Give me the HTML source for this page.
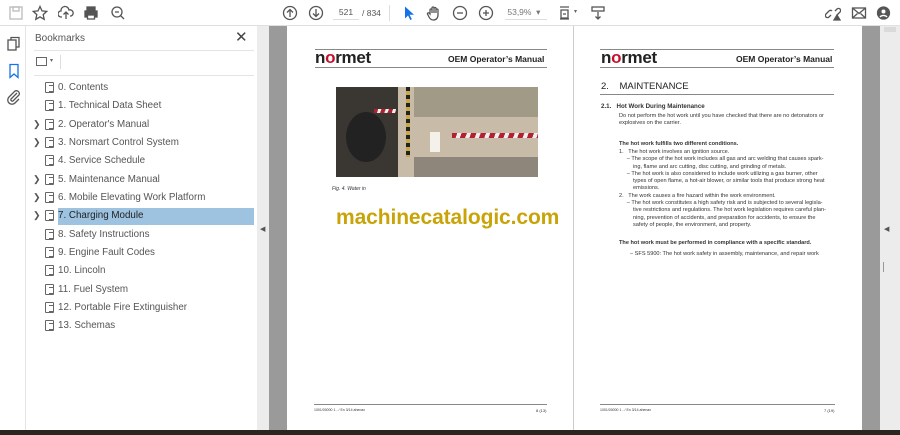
<!DOCTYPE html>
<html><head><meta charset="utf-8"><style>
*{margin:0;padding:0;box-sizing:border-box}
body{width:900px;height:435px;overflow:hidden;background:#fff;font-family:"Liberation Sans",sans-serif;position:relative}
.abs{position:absolute}
.tb{left:0;top:0;width:900px;height:26px;background:#fff;border-bottom:1px solid #e0e0e0}
.ic{position:absolute;top:5px;width:16px;height:16px;stroke:#555;fill:none;stroke-width:1.3}
.rail{left:0;top:26px;width:26px;height:404px;background:#fff;border-right:1px solid #e4e4e4}
.panel{left:26px;top:26px;width:231px;height:404px;background:#fff}
.bm{position:absolute;left:58px;font-size:9.8px;color:#555;height:17px;line-height:17px;white-space:nowrap}
.bi{position:absolute;left:45px;width:9px;height:11px;border:1px solid #666;border-radius:1px}
.bi:after{content:"";position:absolute;left:3px;top:2px;width:4px;height:5px;border-top:1px solid #666;border-bottom:1px solid #666}
.chev{position:absolute;left:33px;font-size:9px;color:#555}
.page{background:#fff}
.ptxt{position:absolute;font-size:5.6px;color:#333;line-height:7.3px;white-space:nowrap}
.logo{position:absolute;font-weight:bold;font-size:17px;color:#222;letter-spacing:-0.3px}
.logo span{color:#c8102e}
</style></head><body>
<div class="abs tb">
<svg class="ic" style="left:8px;stroke:#bbb" viewBox="0 0 16 16"><rect x="2" y="2" width="12" height="12"/><rect x="5" y="2" width="6" height="4"/></svg>
<svg class="ic" style="left:32px" viewBox="0 0 16 16"><path d="M8 1.5l2 4.4 4.7.5-3.5 3.2 1 4.7L8 11.9l-4.2 2.4 1-4.7L1.3 6.4 6 5.9z"/></svg>
<svg class="ic" style="left:58px" viewBox="0 0 16 16"><path d="M4 12H3a3 3 0 010-6 4 4 0 018-1 3 3 0 012 6h-1M8 14V7M5.5 9.5L8 7l2.5 2.5"/></svg>
<svg class="ic" style="left:83px" viewBox="0 0 16 16"><rect x="4" y="2" width="8" height="4" fill="#555"/><rect x="2" y="6" width="12" height="6" fill="#555"/><rect x="4.5" y="10" width="7" height="4" fill="#fff"/></svg>
<svg class="ic" style="left:110px" viewBox="0 0 16 16"><circle cx="7" cy="7" r="5"/><path d="M10.5 10.5L14 14M5 7h4"/></svg>
<svg class="ic" style="left:282px" viewBox="0 0 16 16"><circle cx="8" cy="8" r="6.5"/><path d="M8 12V4.5M5 7.5l3-3 3 3"/></svg>
<svg class="ic" style="left:308px" viewBox="0 0 16 16"><circle cx="8" cy="8" r="6.5"/><path d="M8 4v7.5M5 8.5l3 3 3-3"/></svg>
<div class="abs" style="left:333px;top:7px;width:26px;height:13px;border-bottom:1px solid #ddd;font-size:8.5px;color:#555;text-align:center">521</div>
<div class="abs" style="left:362px;top:8px;font-size:8.5px;color:#555">/ 834</div>
<div class="abs" style="left:389px;top:5px;width:1px;height:16px;background:#ddd"></div>
<svg class="ic" style="left:401px;stroke:none" viewBox="0 0 16 16"><path d="M4 1.5v12l3-3 2.3 4.5 1.6-.8-2.3-4.4H13z" fill="#1473e6"/></svg>
<svg class="ic" style="left:426px" viewBox="0 0 16 16"><path d="M4 9V5a1 1 0 012 0v3V3a1 1 0 012 0v5V3.5a1 1 0 012 0V8 5a1 1 0 012 0v5c0 3-2 5-4.5 5S4 14 3 12l-1.5-3a1 1 0 011.8-.8z"/></svg>
<svg class="ic" style="left:452px" viewBox="0 0 16 16"><circle cx="8" cy="8" r="6.5"/><path d="M5 8h6"/></svg>
<svg class="ic" style="left:478px" viewBox="0 0 16 16"><circle cx="8" cy="8" r="6.5"/><path d="M5 8h6M8 5v6"/></svg>
<div class="abs" style="left:505px;top:7px;width:42px;height:13px;border-bottom:1px solid #ddd;font-size:8.5px;color:#777">&nbsp;53,9% &nbsp;&#9662;</div>
<svg class="ic" style="left:558px" viewBox="0 0 16 16"><path d="M2 2h9M2 14h9M3 5v8h7V5zM5 9h3"/></svg>
<div class="abs" style="left:574px;top:8px;font-size:6px;color:#666">&#9662;</div>
<svg class="ic" style="left:590px" viewBox="0 0 16 16"><rect x="2" y="2" width="12" height="4"/><path d="M8 7v7M5.5 11.5L8 14l2.5-2.5"/></svg>
<svg class="ic" style="left:825px" viewBox="0 0 16 16"><path d="M6 10l-2 2a2 2 0 01-3-3l3-3a2 2 0 013 0M10 6l2-2a2 2 0 013 3l-3 3"/><path d="M9 15l3-5 3 5z" fill="#555"/></svg>
<svg class="ic" style="left:851px" viewBox="0 0 16 16"><rect x="1.5" y="3" width="13" height="10"/><path d="M1.5 3l6.5 5.5L14.5 3M1.5 13l5-4.5M14.5 13l-5-4.5"/></svg>
<svg class="ic" style="left:876px" viewBox="0 0 16 16"><circle cx="7.5" cy="8" r="6" fill="#555"/><circle cx="7.5" cy="6.5" r="2" fill="#fff" stroke="none"/><path d="M4 12a4 3 0 017 0" stroke="#fff"/></svg>
</div>
<div class="abs rail">
<svg class="ic" style="left:6px;top:10px" viewBox="0 0 16 16"><rect x="2" y="4" width="8" height="10"/><path d="M5 4V1.5h8V11h-3"/></svg>
<svg class="ic" style="left:6px;top:37px;stroke:#1473e6" viewBox="0 0 16 16"><path d="M4 1.5h8v13L8 11l-4 3.5z"/></svg>
<svg class="ic" style="left:6px;top:63px" viewBox="0 0 16 16"><path d="M11 4L5 10a1.5 1.5 0 002 2l6-6a3 3 0 00-4-4L3 8a4 4 0 006 6l4-4"/></svg>
</div>
<div class="abs panel">
<div class="abs" style="left:9px;top:7px;font-size:10px;color:#555">Bookmarks</div>
<div class="abs" style="left:209px;top:2px;font-size:15px;color:#444">&#x2715;</div>
<div class="abs" style="left:8px;top:24px;width:220px;height:1px;background:#e4e4e4"></div>
<div class="abs" style="left:10px;top:31px;width:11px;height:9px;border:1px solid #666"></div>
<div class="abs" style="left:24px;top:31px;font-size:6px;color:#666">&#9662;</div>
<div class="abs" style="left:34px;top:29px;width:1px;height:14px;background:#ddd"></div>
<div class="abs" style="left:8px;top:49px;width:220px;height:1px;background:#e4e4e4"></div>
</div>
<div class="abs" style="left:58px;top:208px;width:196px;height:17px;background:#9ec3e0"></div>
<div class="abs" style="left:257px;top:26px;width:12px;height:404px;background:#ececec"></div>
<div class="abs" style="left:260px;top:225px;font-size:7px;color:#555">&#9664;</div>
<div class="abs" style="left:269px;top:26px;width:18px;height:404px;background:#9a9a9a"></div>
<div class="abs" style="left:862px;top:26px;width:18px;height:404px;background:#9a9a9a"></div>
<div class="abs" style="left:880px;top:26px;width:20px;height:404px;background:#ececec"></div>
<div class="abs" style="left:884px;top:225px;font-size:7px;color:#555">&#9664;</div>
<div class="abs" style="left:884px;top:27px;width:12px;height:5px;background:#dadada"></div>
<div class="abs" style="left:883px;top:262px;width:1px;height:10px;background:#999"></div>
<div class="abs" style="left:0;top:430px;width:900px;height:5px;background:#2b2520"></div>
<!-- pages -->
<div class="abs page" style="left:287px;top:26px;width:575px;height:404px"></div>
<div class="abs" style="left:573px;top:26px;width:1px;height:404px;background:#ccc"></div>
<!-- page 1 -->
<div class="abs" style="left:315px;top:49px;width:232px;height:1px;background:#888"></div>
<div class="logo" style="left:315px;top:48px">n<span>o</span>rmet</div>
<div class="abs" style="left:448px;top:54px;font-size:8.5px;font-weight:bold;color:#222">OEM Operator’s Manual</div>
<div class="abs" style="left:315px;top:67px;width:232px;height:1px;background:#888"></div>
<div class="abs" style="left:336px;top:87px;width:202px;height:90px;background:#c8bca8;overflow:hidden">
 <div class="abs" style="left:0;top:0;width:62px;height:90px;background:#3a3732"></div>
 <div class="abs" style="left:10px;top:25px;width:40px;height:50px;border-radius:50%;background:#222"></div>
 <div class="abs" style="left:70px;top:0;width:4px;height:70px;background:repeating-linear-gradient(180deg,#222 0 4px,#c9a84a 4px 8px)"></div>
 <div class="abs" style="left:78px;top:0;width:124px;height:30px;background:#a09a86"></div>
 <div class="abs" style="left:78px;top:70px;width:124px;height:20px;background:#8e867a"></div>
 <div class="abs" style="left:116px;top:46px;width:86px;height:5px;background:repeating-linear-gradient(110deg,#b32030 0 5px,#eee 5px 9px)"></div>
 <div class="abs" style="left:38px;top:22px;width:22px;height:4px;background:repeating-linear-gradient(110deg,#b32030 0 4px,#eee 4px 7px)"></div>
 <div class="abs" style="left:94px;top:45px;width:10px;height:20px;background:#f4f1ea"></div>
</div>
<div class="ptxt" style="left:332px;top:186px;font-style:italic;font-size:5px">Fig. 4. Water in</div>
<div class="abs" style="left:336px;top:206px;font-size:21px;font-weight:bold;color:#c9a408;letter-spacing:-0.1px">machinecatalogic.com</div>
<div class="abs" style="left:314px;top:404px;width:233px;height:1px;background:#888"></div>
<div class="ptxt" style="left:314px;top:407px;font-size:3.5px">1001/00000 1 - / En 3/14 ahenax</div>
<div class="ptxt" style="left:536px;top:407px;font-size:4px">8 (13)</div>
<!-- page 2 -->
<div class="abs" style="left:600px;top:49px;width:234px;height:1px;background:#888"></div>
<div class="logo" style="left:601px;top:48px">n<span>o</span>rmet</div>
<div class="abs" style="left:736px;top:54px;font-size:8.5px;font-weight:bold;color:#222">OEM Operator’s Manual</div>
<div class="abs" style="left:600px;top:67px;width:234px;height:1px;background:#888"></div>
<div class="abs" style="left:601px;top:81px;font-size:9.5px;color:#222">2.&nbsp;&nbsp;&nbsp; MAINTENANCE</div>
<div class="abs" style="left:600px;top:94px;width:234px;height:1px;background:#888"></div>
<div class="ptxt" style="left:601px;top:103px;font-size:6.2px;font-weight:bold">2.1.&nbsp;&nbsp; Hot Work During Maintenance</div>
<div class="ptxt" style="left:619px;top:113px">Do not perform the hot work until you have checked that there are no detonators or<br>explosives on the carrier.</div>
<div class="ptxt" style="left:619px;top:141px;font-weight:bold">The hot work fulfills two different conditions.</div>
<div class="ptxt" style="left:619px;top:149px">1.&nbsp;&nbsp; The hot work involves an ignition source.<br>&nbsp;&nbsp;&nbsp;&nbsp;&nbsp;– The scope of the hot work includes all gas and arc welding that causes spark-<br>&nbsp;&nbsp;&nbsp;&nbsp;&nbsp;&nbsp;&nbsp;&nbsp; ing, flame and arc cutting, disc cutting, and grinding of metals.<br>&nbsp;&nbsp;&nbsp;&nbsp;&nbsp;– The hot work is also considered to include work utilizing a gas burner, other<br>&nbsp;&nbsp;&nbsp;&nbsp;&nbsp;&nbsp;&nbsp;&nbsp; types of open flame, a hot-air blower, or similar tools that produce strong heat<br>&nbsp;&nbsp;&nbsp;&nbsp;&nbsp;&nbsp;&nbsp;&nbsp; emissions.<br>2.&nbsp;&nbsp; The work causes a fire hazard within the work environment.<br>&nbsp;&nbsp;&nbsp;&nbsp;&nbsp;– The hot work constitutes a high safety risk and is subjected to several legisla-<br>&nbsp;&nbsp;&nbsp;&nbsp;&nbsp;&nbsp;&nbsp;&nbsp; tive restrictions and regulations. The hot work legislation requires careful plan-<br>&nbsp;&nbsp;&nbsp;&nbsp;&nbsp;&nbsp;&nbsp;&nbsp; ning, prevention of accidents, and preparation for accidents, to ensure the<br>&nbsp;&nbsp;&nbsp;&nbsp;&nbsp;&nbsp;&nbsp;&nbsp; safety of people, the environment, and property.</div>
<div class="ptxt" style="left:619px;top:240px;font-weight:bold">The hot work must be performed in compliance with a specific standard.</div>
<div class="ptxt" style="left:630px;top:251px">– SFS 5900: The hot work safety in assembly, maintenance, and repair work</div>
<div class="abs" style="left:600px;top:404px;width:235px;height:1px;background:#888"></div>
<div class="ptxt" style="left:600px;top:407px;font-size:3.5px">1001/00000 1 - / En 3/14 ahenax</div>
<div class="ptxt" style="left:824px;top:407px;font-size:4px">7 (19)</div>
<!-- bookmarks list -->
<div class="bi" style="top:82px"></div><div class="bm" style="top:79px">0. Contents</div>
<div class="bi" style="top:100px"></div><div class="bm" style="top:97px">1. Technical Data Sheet</div>
<div class="chev" style="top:119px">&#x276F;</div><div class="bi" style="top:119px"></div><div class="bm" style="top:116px">2. Operator's Manual</div>
<div class="chev" style="top:137px">&#x276F;</div><div class="bi" style="top:137px"></div><div class="bm" style="top:134px">3. Norsmart Control System</div>
<div class="bi" style="top:155px"></div><div class="bm" style="top:152px">4. Service Schedule</div>
<div class="chev" style="top:174px">&#x276F;</div><div class="bi" style="top:174px"></div><div class="bm" style="top:171px">5. Maintenance Manual</div>
<div class="chev" style="top:192px">&#x276F;</div><div class="bi" style="top:192px"></div><div class="bm" style="top:189px">6. Mobile Elevating Work Platform</div>
<div class="chev" style="top:210px">&#x276F;</div><div class="bi" style="top:210px"></div><div class="bm" style="top:207px;color:#222">7. Charging Module</div>
<div class="bi" style="top:229px"></div><div class="bm" style="top:226px">8. Safety Instructions</div>
<div class="bi" style="top:247px"></div><div class="bm" style="top:244px">9. Engine Fault Codes</div>
<div class="bi" style="top:265px"></div><div class="bm" style="top:262px">10. Lincoln</div>
<div class="bi" style="top:284px"></div><div class="bm" style="top:281px">11. Fuel System</div>
<div class="bi" style="top:302px"></div><div class="bm" style="top:299px">12. Portable Fire Extinguisher</div>
<div class="bi" style="top:320px"></div><div class="bm" style="top:317px">13. Schemas</div>
</body></html>
